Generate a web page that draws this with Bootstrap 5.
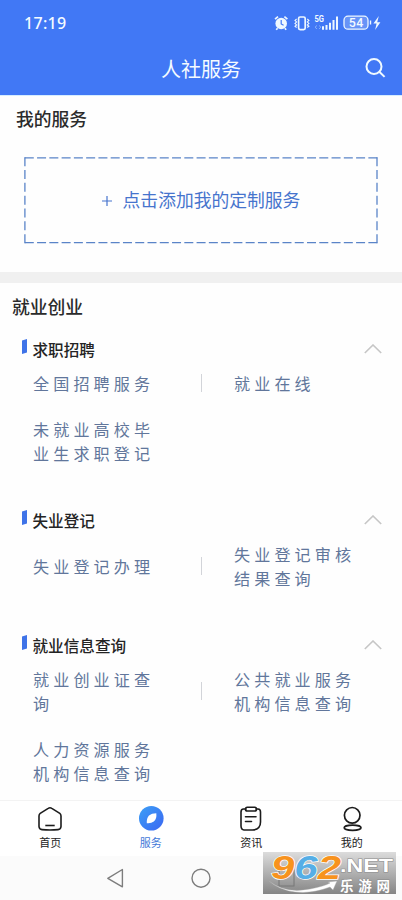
<!DOCTYPE html>
<html lang="zh-CN">
<head>
<meta charset="utf-8">
<meta name="viewport" content="width=device-width, initial-scale=1">
<title>人社服务</title>
<link href="https://cdn.jsdelivr.net/npm/bootstrap@5.3.0/dist/css/bootstrap.min.css" rel="stylesheet">
<style>
body{font-family:"Noto Sans CJK SC",sans-serif;width:402px;height:900px;overflow:hidden;background:#fefefe;color:#2b2b2b}
svg{display:block;flex:none}
.app-head{height:95px;background:#4178f5;color:#f4fbff;box-shadow:0 1px #d6edff}
.status{height:46px;padding:0 20px 0 24px}
.clock{font:500 16px/1 "Noto Sans",sans-serif;letter-spacing:.3px}
.titlebar{height:45px;display:grid;grid-template-columns:1fr auto 1fr}
.titlebar h1{font-size:20px;line-height:44px;font-weight:400}
.mine{height:177px}
.sec-title{font-size:17.8px;line-height:24px;font-weight:500}
.mine .sec-title{padding:11px 0 0 16px}
.add-box{margin:27px 24px 0;width:354px;height:87px;color:#4674cd;font-size:17.8px}
.add-box svg.frame{grid-area:1/1}
.add-box .add-label{grid-area:1/1;gap:11px;padding-bottom:2px}
.sep{height:11px;background:#f0f0f0}
.jobs{height:517px}
.jobs>.sec-title{padding:11px 0 0 12px;height:55px}
.group{margin-bottom:33px}
.group-head{height:22px;padding:0 20px 0 22px}
.group-head h3{font-size:15.6px;line-height:22px;font-weight:500;color:#242424;padding-left:5.5px}
.group-head .tick{margin-bottom:5px}
.svc{width:201px;padding:11px 43px 11px 33px;font-size:16.1px;letter-spacing:4.1px;line-height:24px;color:#61769b}
.svc+.bar+.svc{width:200px;padding-left:32px}
.svc span{width:124px;flex:none}
.bar{width:1px;height:18px;flex:none;background:#d2d4d9}
.tabs{height:56px;border-top:1px solid #f3f3f3;background:#fff}
.tab{font-size:11px;line-height:14px;color:#222;padding-top:5px;gap:3px}
.tab.on{color:#4178d8}
.sysbar{height:44px;background:#fbfbfb}
.stamp{left:263px;top:852px;width:133px;height:42px;background:linear-gradient(#dcdcdc,#858585)}
.stamp svg{overflow:visible}
</style>
<script src="https://cdn.jsdelivr.net/npm/bootstrap@5.3.0/dist/js/bootstrap.bundle.min.js"></script>
</head>
<body class="d-flex flex-column position-relative">
<header class="app-head">
  <div class="status d-flex align-items-center justify-content-between">
    <span class="clock">17:19</span>
    <svg width="108" height="20" viewBox="0 0 108 20" fill="none" stroke="#eef8ff">
      <circle cx="7.2" cy="10.5" r="5.8" fill="#eef8ff" stroke="none"/>
      <path d="M1 6.2 4 3.6M10.4 3.6l3 2.6M3.6 15.2l-1.4 1.6M10.8 15.2l1.4 1.6" stroke-width="1.7"/>
      <path d="M7.2 7v4l2.4 1.3" stroke="#4178f5" stroke-width="1.2"/>
      <rect x="24.6" y="4" width="6.6" height="12.6" rx="1.5" stroke-width="1.7"/>
      <path d="m22.6 6-1.6 1.4 1.6 1.5-1.6 1.5 1.6 1.5-1.6 1.4 1.6 1.2M33.3 6l1.6 1.4-1.6 1.5 1.6 1.5-1.6 1.5 1.6 1.4-1.6 1.2" stroke-width="1.1"/>
      <text x="40.5" y="9.4" font-family="Roboto" font-size="8.5" font-weight="700" textLength="9.5" lengthAdjust="spacingAndGlyphs" fill="#f4fbff" stroke="none">5G</text>
      <path d="m43 12.5-2 1.7 2 1.7M45 12.5l2 1.7-2 1.7" stroke="#8db4fb" stroke-width=".9"/>
      <path d="M49 13.2v3.5M52.5 12v4.7M56 9.7v7M59.5 7v9.7M63 3.5v13.2" stroke-width="2"/>
      <rect x="70" y="3.2" width="24" height="13" rx="4" fill="#6894f7" stroke-width="1.3"/>
      <text x="82.2" y="14" text-anchor="middle" font-family="Roboto" font-size="12.4" font-weight="500" letter-spacing=".5" fill="#f4fbff" stroke="none">54</text>
      <path d="M96.5 7.5v4" stroke-width="1.4"/>
      <path d="m104.8 3-5.4 7.4h3.2l-1.5 6.6 5.3-7.8h-3.2z" fill="#eef8ff" stroke="none"/>
    </svg>
  </div>
  <div class="titlebar align-items-center">
    <span></span><h1 class="m-0">人社服务</h1>
    <svg class="ms-auto me-3" width="21" height="21" viewBox="0 0 21 21" fill="none" stroke="#f0faff" stroke-width="2"><circle cx="9" cy="8.5" r="7.5"/><path d="m14.3 13.8 5.3 5.1"/></svg>
  </div>
</header>
<main>
  <section class="mine">
    <h2 class="sec-title m-0">我的服务</h2>
    <div class="add-box d-grid">
      <svg class="frame" width="354" height="87" fill="none" stroke="#5a84c8" stroke-width="1.3"><path d="M.8 .8H353.3M.8 85.6H353.3" stroke-dasharray="9 3.27"/><path d="M.9 .2V86.2M353 .2V86.2" stroke-dasharray="9 3.83"/></svg>
      <div class="add-label d-flex align-items-center justify-content-center"><svg width="10" height="12" stroke="#4674cd" stroke-width="1.2"><path d="M0 7h10M5 2v10"/></svg><span>点击添加我的定制服务</span></div>
    </div>
  </section>
  <div class="sep"></div>
  <section class="jobs">
    <h2 class="sec-title m-0">就业创业</h2>
    <div class="group">
      <div class="group-head d-flex align-items-center"><svg class="tick" width="5" height="16"><path d="M0 1.5 5 0v13.5L0 15z" fill="#3f73e8"/></svg><h3 class="m-0">求职招聘</h3><svg class="ms-auto" width="18" height="10" fill="none" stroke="#c6c6c6" stroke-width="1.6"><path d="m.8 9 8.2-8 8.2 8"/></svg></div>
      <div class="d-flex align-items-center"><div class="svc d-flex"><span>全国招聘服务</span></div><i class="bar"></i><div class="svc d-flex"><span>就业在线</span></div></div>
      <div class="d-flex"><div class="svc d-flex"><span>未就业高校毕业生求职登记</span></div></div>
    </div>
    <div class="group">
      <div class="group-head d-flex align-items-center"><svg class="tick" width="5" height="16"><path d="M0 1.5 5 0v13.5L0 15z" fill="#3f73e8"/></svg><h3 class="m-0">失业登记</h3><svg class="ms-auto" width="18" height="10" fill="none" stroke="#c6c6c6" stroke-width="1.6"><path d="m.8 9 8.2-8 8.2 8"/></svg></div>
      <div class="d-flex align-items-center"><div class="svc d-flex"><span>失业登记办理</span></div><i class="bar"></i><div class="svc d-flex"><span>失业登记审核结果查询</span></div></div>
    </div>
    <div class="group mb-0">
      <div class="group-head d-flex align-items-center"><svg class="tick" width="5" height="16"><path d="M0 1.5 5 0v13.5L0 15z" fill="#3f73e8"/></svg><h3 class="m-0">就业信息查询</h3><svg class="ms-auto" width="18" height="10" fill="none" stroke="#c6c6c6" stroke-width="1.6"><path d="m.8 9 8.2-8 8.2 8"/></svg></div>
      <div class="d-flex align-items-center"><div class="svc d-flex"><span>就业创业证查询</span></div><i class="bar"></i><div class="svc d-flex"><span>公共就业服务机构信息查询</span></div></div>
      <div class="d-flex"><div class="svc d-flex"><span>人力资源服务机构信息查询</span></div></div>
    </div>
  </section>
</main>
<nav class="tabs row g-0">
  <div class="col tab d-flex flex-column align-items-center"><svg width="26" height="26" viewBox="0 0 26 26" fill="none" stroke="#1c1c1c" stroke-width="1.6" stroke-linejoin="round"><path d="M11.2 2.4Q13 1.2 14.8 2.4L22.8 7.4Q24 8.3 24 10V20.5Q23.8 23.4 21 23.6Q13 24.3 5 23.6Q2.2 23.4 2 20.5V10Q2 8.3 3.2 7.4Z"/><path d="M8.3 19.5h9.4"/></svg><span>首页</span></div>
  <div class="col tab on d-flex flex-column align-items-center"><svg width="26" height="26" viewBox="0 0 26 26"><defs><linearGradient id="blue" x2="1" y2="1"><stop stop-color="#3ca0f6"/><stop offset="1" stop-color="#3b66f2"/></linearGradient></defs><circle cx="13.3" cy="12.3" r="12.3" fill="url(#blue)"/><path d="M18.3 7.2Q19 13 15.8 15.5Q13 17.7 8.8 17.2Q8.5 12 11 9.5Q13.5 7.2 18.3 7.2Z" fill="#fff"/></svg><span>服务</span></div>
  <div class="col tab d-flex flex-column align-items-center"><svg width="26" height="26" viewBox="0 0 26 26" fill="none" stroke="#1c1c1c" stroke-width="1.6" stroke-linejoin="round" stroke-linecap="round"><path d="M8 3H5.5Q3 3.2 3 6V20Q3.2 23.8 6 24H14.5Q22.5 23.5 22.5 16V6Q22.5 3.2 20 3H18"/><rect x="7.5" y="1.2" width="11" height="3.8" rx="1.8"/><path d="M7.5 10.7H18M7.5 15.5H13.5"/></svg><span>资讯</span></div>
  <div class="col tab d-flex flex-column align-items-center"><svg width="26" height="26" viewBox="0 0 26 26" fill="none" stroke="#1c1c1c" stroke-width="1.7"><circle cx="13.2" cy="9.3" r="7.8"/><ellipse cx="13.6" cy="21.7" rx="8.4" ry="2.6"/></svg><span>我的</span></div>
</nav>
<footer class="sysbar d-flex">
  <svg width="402" height="44" viewBox="0 0 402 44" fill="none" stroke="#7d7d7d" stroke-width="1.4" stroke-linejoin="round"><path d="M107.8 22.3 122.4 13.5V30.8Z"/><circle cx="201" cy="22.2" r="9"/></svg>
</footer>
<div class="stamp position-absolute">
  <svg width="133" height="42" viewBox="0 0 133 42">
    <rect x="16" y="18" width="15" height="16" fill="none" stroke="#777"/>
    <path d="M6 29Q22 42 47 37Q62 34 67 31L65 30 74 29 70 38 67 35Q49 42 32 40Q16 38 6 29Z" fill="#fff" stroke="#aaa" stroke-width=".4"/>
    <text x="8" y="27" font-family="Liberation Sans,sans-serif" font-style="italic" font-weight="700" font-size="34" textLength="70" lengthAdjust="spacingAndGlyphs" stroke="#fff" stroke-width="1.4" paint-order="stroke"><tspan fill="#f7931e">9</tspan><tspan fill="#55aee6">6</tspan><tspan fill="#f7931e">2</tspan></text>
    <g fill="#fff" stroke="#8a8a8a" stroke-width="1" paint-order="stroke" font-weight="700">
      <text x="77" y="19.8" font-family="Liberation Sans,sans-serif" font-size="18" textLength="53" lengthAdjust="spacingAndGlyphs">.NET</text>
      <text x="77" y="38.8" font-family="Noto Sans CJK SC,sans-serif" font-size="13.5" textLength="50">乐游网</text>
    </g>
  </svg>
</div>
</body>
</html>
